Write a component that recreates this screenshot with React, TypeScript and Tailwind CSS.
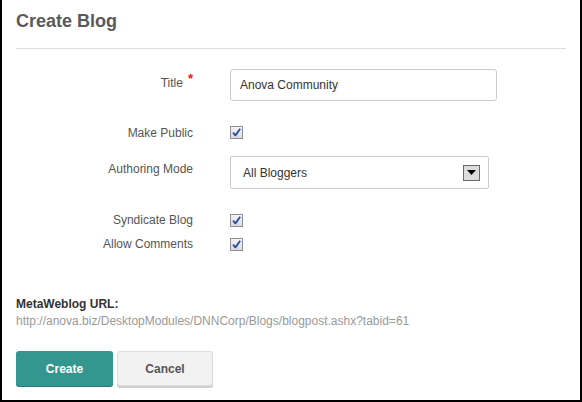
import React from "react";

function Checkbox() {
  return (
    <span className="inline-flex h-[13px] w-[13px] items-center justify-center border border-[#8e8f95] bg-gradient-to-b from-[#f4f4f8] to-[#d9dbe4]">
      <svg width="11" height="11" viewBox="0 0 11 11">
        <path d="M2 5.6 L4.4 8.4 L9.2 1.8" fill="none" stroke="#2c4aa0" strokeWidth="1.8" strokeLinejoin="round" />
      </svg>
    </span>
  );
}

function Label({ children, required }: { children: React.ReactNode; required?: boolean }) {
  return (
    <div className="w-[177px] shrink-0 text-right text-[12px] leading-[14px] text-[#555]">
      {children}
      {required && <span className="relative -top-[4px] ml-[5px] text-[13px] font-bold text-[#ee1111]">*</span>}
    </div>
  );
}

export default function App() {
  return (
    <div
      className="h-[402px] w-[582px] border-x-2 border-b-2 border-black bg-white px-[14px]"
      style={{ fontFamily: '"Liberation Sans", Arial, sans-serif' }}
    >
      <div className="border-b border-[#dddddd] pb-[15px] pt-[9px]">
        <h1 className="text-[18px] font-bold leading-[24px] text-[#5a5a5a]">Create Blog</h1>
      </div>

      <div className="mt-[20px] flex items-start gap-[37px]">
        <div className="pt-[7px]">
          <Label required>Title</Label>
        </div>
        <div className="flex h-[32px] w-[267px] items-center rounded-[3px] border border-[#cccccc] px-[9px] text-[12px] text-[#333]">
          Anova Community
        </div>
      </div>

      <div className="mt-[25px] flex items-start gap-[37px]">
        <Label>Make Public</Label>
        <Checkbox />
      </div>

      <div className="mt-[16px] flex items-start gap-[37px]">
        <div className="pt-[6px]">
          <Label>Authoring Mode</Label>
        </div>
        <div className="flex h-[33px] w-[259px] items-center justify-between rounded-[2px] border border-[#cccccc] pl-[12px] pr-[8px] text-[12px] text-[#333]">
          <span>All Bloggers</span>
          <span className="flex h-[16px] w-[17px] items-center justify-center border border-[#6a6a6a] bg-[#dcdcdc]">
            <svg width="9" height="5" viewBox="0 0 9 5">
              <path d="M0 0 H9 L4.5 5 Z" fill="#000" />
            </svg>
          </span>
        </div>
      </div>

      <div className="mt-[24px] flex items-center gap-[37px]">
        <Label>Syndicate Blog</Label>
        <Checkbox />
      </div>

      <div className="mt-[10px] flex items-center gap-[37px]">
        <Label>Allow Comments</Label>
        <Checkbox />
      </div>

      <div className="mt-[46px] text-[12px] leading-[14px]">
        <p className="font-bold text-[#333]">MetaWeblog URL:</p>
        <p className="mt-[3px] text-[#999]">http://anova.biz/DesktopModules/DNNCorp/Blogs/blogpost.ashx?tabid=61</p>
      </div>

      <div className="mt-[23px] flex gap-[4px]">
        <button className="h-[35px] w-[97px] rounded-[3px] bg-[#35968f] text-[12px] font-bold text-white shadow-[0_1px_0_#2a7772]">
          Create
        </button>
        <button className="h-[35px] w-[96px] rounded-[3px] border border-[#dddddd] bg-[#f2f2f2] text-[12px] font-bold text-[#555] shadow-[0_2px_0_#cfcfcf]">
          Cancel
        </button>
      </div>
    </div>
  );
}
